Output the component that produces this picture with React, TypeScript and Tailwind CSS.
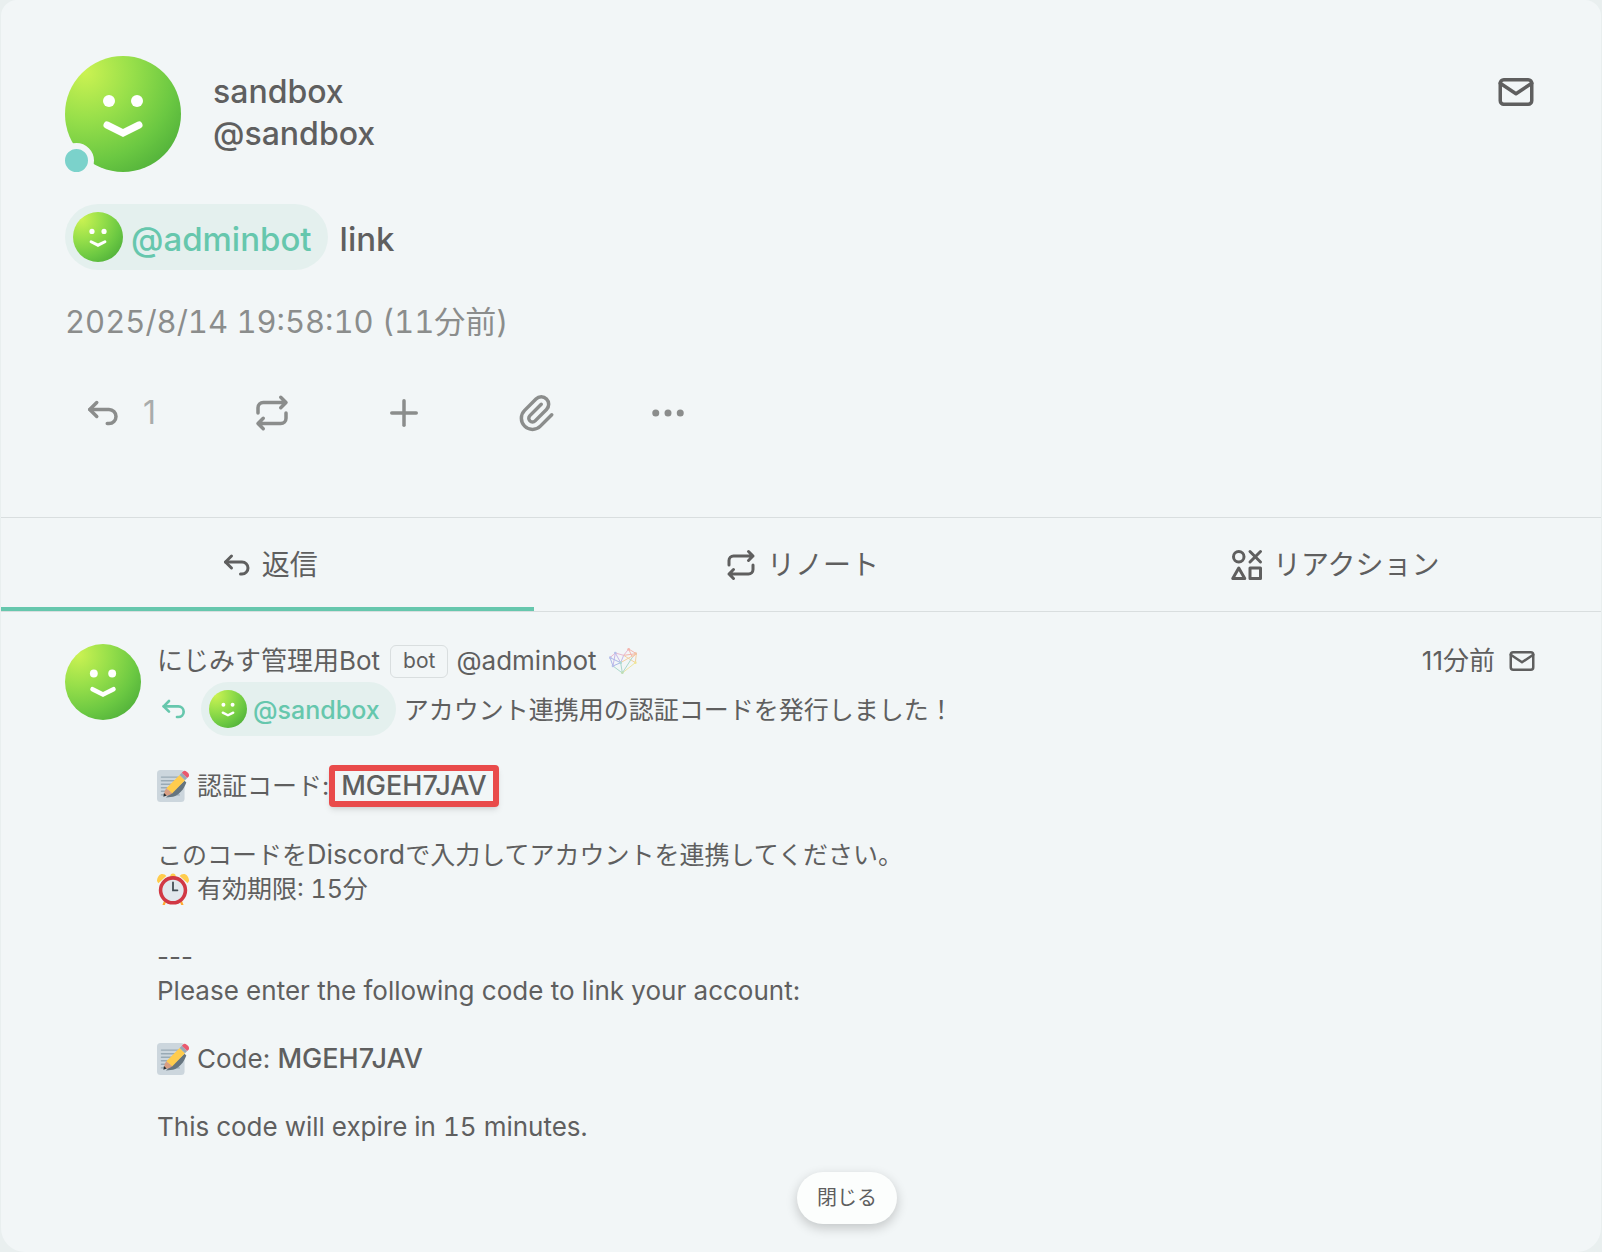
import type { ReactNode } from "react";
import {
  TbArrowBackUp,
  TbDots,
  TbIcons,
  TbMail,
  TbPaperclip,
  TbPlus,
  TbRepeat,
} from "react-icons/tb";

const Avatar = ({ className }: { className: string }) => (
  <svg viewBox="0 0 116 116" className={`shrink-0 ${className}`} role="img" aria-label="avatar">
    <defs>
      <radialGradient id="face" gradientUnits="userSpaceOnUse" cx="20" cy="16" r="120">
        <stop offset="0" stopColor="#cbf252" />
        <stop offset="0.4" stopColor="#97df4a" />
        <stop offset="0.75" stopColor="#6bc842" />
        <stop offset="1" stopColor="#50b03a" />
      </radialGradient>
    </defs>
    <circle cx="58" cy="58" r="58" fill="url(#face)" />
    <circle cx="44" cy="45" r="6" fill="#fff" />
    <circle cx="72" cy="45" r="6" fill="#fff" />
    <path
      d="M42 69l16 8l16-8"
      fill="none"
      stroke="#fff"
      strokeWidth="7"
      strokeLinecap="round"
      strokeLinejoin="miter"
    />
  </svg>
);

const Memo = () => (
  <svg viewBox="0 0 36 36" className="h-8 w-8 shrink-0" role="img" aria-label="memo">
    <rect x="0" y="0" width="31" height="36" rx="4" fill="#ccd6dd" />
    <path
      d="M5 8h19M5 12h17M5 16h15M5 20h14M5 24h20M5 28h20"
      stroke="#99aab5"
      strokeWidth="1.6"
      strokeLinecap="round"
    />
    <path d="M31 12l2 2c-3 8-8 14-15 16l-8 1z" fill="#66757f" />
    <path d="M25.5 5.500l6 6L17 26.500l-6.500-6z" fill="#ffcc4d" />
    <path d="M10.500 20.500l6.500 6c-2.500 2-5.500 2.500-9 3c0-4 .5-6.500 2.500-9z" fill="#d99e82" />
    <path d="M7.800 26l3 2.800L7.200 30z" fill="#292f33" />
    <path d="M25.500 5.500l2.500-2.500l6 6l-2.500 2.500z" fill="#99aab5" />
    <path d="M28 3l2-2c2-1.500 7.500 3.500 6 6l-2 2z" fill="#ea596e" />
  </svg>
);

const AlarmClock = () => (
  <svg viewBox="0 0 36 36" className="h-8 w-8 shrink-0" role="img" aria-label="alarm clock">
    <circle cx="18" cy="3.500" r="3" fill="#ffcc4d" />
    <path d="M9 32l-1.500 4M27 32l1.500 4" stroke="#ffac33" strokeWidth="2.500" strokeLinecap="round" />
    <circle cx="18" cy="19.500" r="14" fill="#e1e8ed" stroke="#d13844" strokeWidth="4" />
    <path d="M0 9c0-5 3-8 6-8c2 0 3.500 1 4.500 2.500L1.500 11.500z" fill="#ffcc4d" />
    <path d="M36 9c0-5-3-8-6-8c-2 0-3.500 1-4.500 2.500l9 8z" fill="#ffcc4d" />
    <path d="M18 10.500v9h5" fill="none" stroke="#414d54" strokeWidth="2" strokeLinecap="round" />
  </svg>
);

const InstanceLogo = () => (
  <svg viewBox="0 0 84 78" className="h-7 w-7 opacity-60" fill="none" strokeWidth="3" role="img" aria-label="にじみす">
    <path d="M3 29L19 15L44 22L59 3" stroke="#e58fb8" />
    <path d="M59 3L82 17L44 22M59 3L70 28L82 17" stroke="#f58a7c" />
    <path d="M44 22L35 44L19 15L12 54" stroke="#a98be0" />
    <path d="M3 29L12 54L35 44L3 29" stroke="#7d8fe0" />
    <path d="M82 17L79 44L44 22M82 17L35 44" stroke="#f3b76a" />
    <path d="M79 44L40 75" stroke="#ecdc6a" />
    <path d="M40 75L12 54M40 75L35 44M40 75L70 28" stroke="#79c5b0" />
    <g fill="#8f9be0">
      <circle cx="4" cy="29" r="4" />
      <circle cx="19" cy="15" r="4" />
      <circle cx="12" cy="54" r="4" />
    </g>
    <circle cx="59" cy="4" r="4" fill="#f58a7c" />
    <circle cx="80" cy="17" r="4" fill="#f3a06a" />
    <circle cx="79" cy="44" r="4" fill="#f0dc5a" />
    <circle cx="40" cy="74" r="4" fill="#9ccf8a" />
    <circle cx="35" cy="44" r="4" fill="#79c5c0" />
  </svg>
);

const ActionButton = ({ label, children }: { label: string; children: ReactNode }) => (
  <button type="button" aria-label={label} className="flex items-center">
    {children}
  </button>
);

const tabs = [
  { label: "返信", icon: TbArrowBackUp, active: true },
  { label: "リノート", icon: TbRepeat, active: false },
  { label: "リアクション", icon: TbIcons, active: false },
];

const App = () => {
  return (
    <div className="min-h-screen bg-[#e9efef] px-px font-['Inter','Noto_Sans_CJK_JP',sans-serif] text-[#5f5f5f]">
      <main className="min-h-screen rounded-t-2xl rounded-b-3xl bg-[#f2f6f7]">
        <article className="px-16 pt-14 pb-[83px]">
          <header className="flex gap-8">
            <div className="relative shrink-0">
              <Avatar className="h-[116px] w-[116px]" />
              <span className="absolute -bottom-1.5 -left-1.5 h-[35px] w-[35px] rounded-full border-6 border-[#f2f6f7] bg-[#7bd2cb]" />
            </div>
            <div className="flex-1 pt-[15px] text-[32px] leading-[42px] font-medium">
              <div className="flex items-center justify-between">
                <a href="#sandbox">sandbox</a>
                <TbMail className="h-[42px] w-[42px]" />
              </div>
              <div>@sandbox</div>
            </div>
          </header>

          <p className="mt-8 flex items-center gap-3 text-[33px] leading-[46px] font-medium">
            <a
              href="#adminbot"
              className="flex items-center gap-2 rounded-full bg-[#e4f0ee] py-2 pr-4 pl-2 text-[#66c7ad]"
            >
              <Avatar className="h-[50px] w-[50px]" />
              <span className="pt-1">@adminbot</span>
            </a>
            <span className="pt-1">link</span>
          </p>

          <time className="mt-[31px] mb-[49px] block text-[31px] leading-[42px] text-[#8b8d8c] tabular-nums">
            2025/8/14 19:58:10 (11分前)
          </time>

          <div className="flex items-center gap-[90px] pl-4 text-[32px] leading-[42px] text-[#8b8d8c]">
            <button type="button" aria-label="返信 1" className="flex w-20 items-center gap-5">
              <TbArrowBackUp className="h-[42px] w-[42px] shrink-0" />
              <span className="opacity-70">1</span>
            </button>
            <ActionButton label="リノート">
              <TbRepeat className="h-[42px] w-[42px]" />
            </ActionButton>
            <ActionButton label="リアクション">
              <TbPlus className="h-[42px] w-[42px]" />
            </ActionButton>
            <ActionButton label="クリップ">
              <TbPaperclip className="h-[42px] w-[42px]" />
            </ActionButton>
            <ActionButton label="もっと">
              <TbDots className="h-[42px] w-[42px]" />
            </ActionButton>
          </div>
        </article>

        <nav className="grid grid-cols-3 border-y border-[#d9dedf]">
          {tabs.map(({ label, icon: Icon, active }) => (
            <button
              key={label}
              type="button"
              className={`flex h-[93px] items-center justify-center gap-2 border-y-4 border-t-transparent text-[28px] ${
                active ? "border-b-[#66c7ad]" : "border-b-transparent"
              }`}
            >
              <Icon className="h-9 w-9" />
              {label}
            </button>
          ))}
        </nav>

        <article className="flex gap-4 px-16 pt-8 pb-7">
          <Avatar className="h-[76px] w-[76px]" />
          <div className="min-w-0 flex-1 text-[25px] leading-[34px]">
            <header className="mb-1 flex h-[34px] items-center text-[26px]">
              <a href="#adminbot">にじみす管理用Bot</a>
              <span className="mr-2 ml-2.5 flex h-[33px] items-center rounded-md border border-[#d9dedf] px-3 text-[21px]">
                bot
              </span>
              <span className="mr-3">@adminbot</span>
              <InstanceLogo />
              <time className="mr-3 ml-auto">11分前</time>
              <TbMail className="h-[30px] w-[30px]" />
            </header>

            <p className="flex items-center">
              <TbArrowBackUp className="mr-3 h-8 w-8 text-[#66c7ad]" />
              <a
                href="#sandbox"
                className="mr-2 flex items-center gap-1.5 rounded-full bg-[#e4f0ee] py-2 pr-4 pl-2 text-[#66c7ad]"
              >
                <Avatar className="h-[38px] w-[38px]" />
                <span className="pt-0.5 font-medium">@sandbox</span>
              </a>
              <span className="pt-0.5">アカウント連携用の認証コードを発行しました！</span>
            </p>

            <p className="mt-[33px] flex h-[34px] items-center">
              <Memo />
              <span className="ml-2">認証コード:</span>
              <strong className="rounded-sm border-6 border-[#e94b4b] px-1.5 text-[27px] leading-[30px] font-medium shadow-md">
                MGEH7JAV
              </strong>
            </p>

            <p className="mt-[35px]">
              このコードを<span className="text-[27px]">Discord</span>で入力してアカウントを連携してください。
            </p>
            <p className="flex h-[34px] items-center gap-2 tabular-nums">
              <AlarmClock />
              有効期限: 15分
            </p>

            <div className="mt-[34px] text-[26px]">
              <p>---</p>
              <p>Please enter the following code to link your account:</p>
              <p className="mt-[34px] flex h-[34px] items-center gap-2">
                <Memo />
                <span>
                  Code: <strong className="text-[27px] font-medium">MGEH7JAV</strong>
                </span>
              </p>
              <p className="mt-[34px] tabular-nums">This code will expire in 15 minutes.</p>
            </div>

            <div className="mt-7 flex justify-center">
              <button
                type="button"
                className="rounded-full bg-[#fcfefd] px-5 py-3 text-xl leading-7 shadow-[0_4px_12px_rgba(0,0,0,0.2)]"
              >
                閉じる
              </button>
            </div>
          </div>
        </article>
      </main>
    </div>
  );
};

export default App;
